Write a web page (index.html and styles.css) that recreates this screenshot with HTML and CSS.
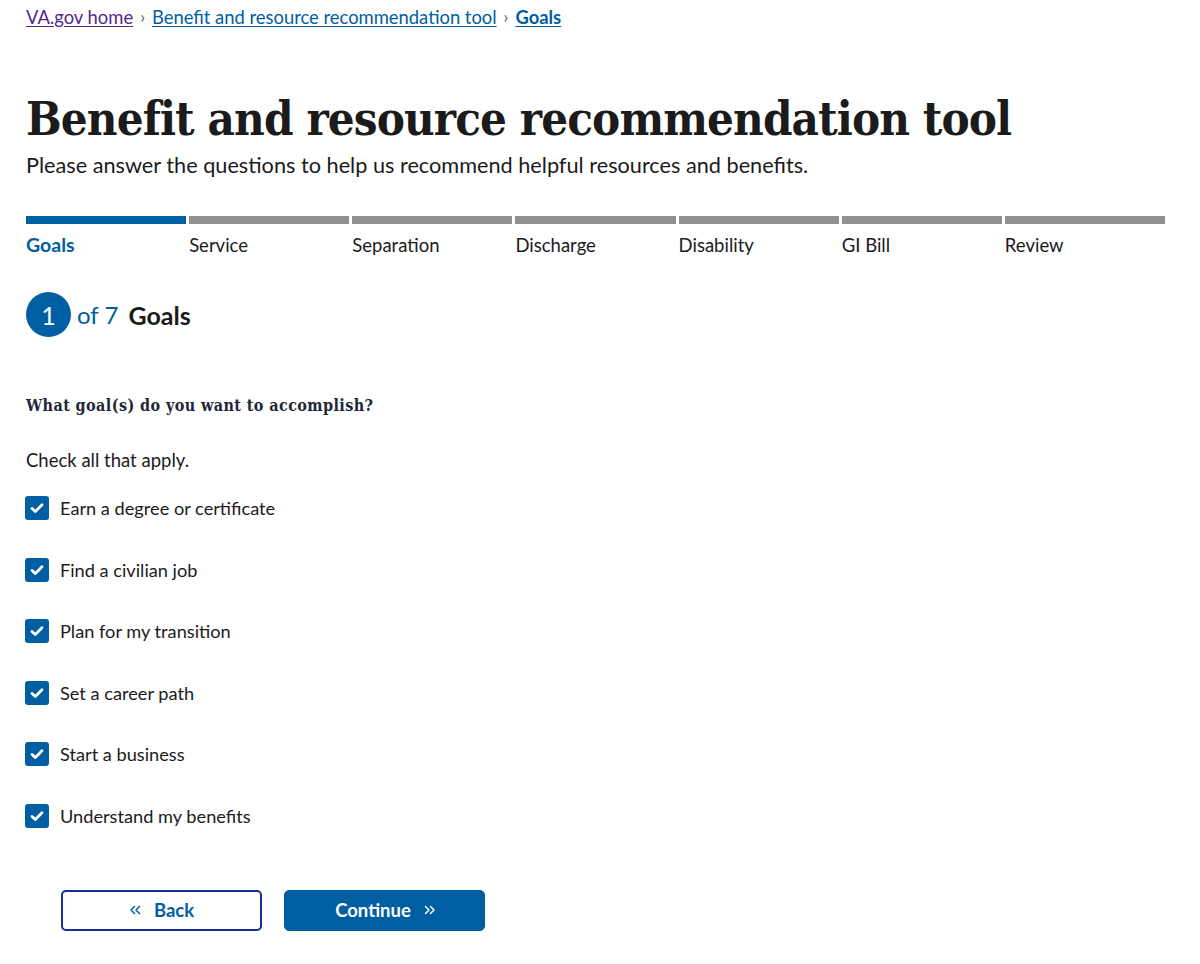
FILE: index.html
```html
<!DOCTYPE html>
<html lang="en">
<head>
<meta charset="utf-8">
<title>Benefit and resource recommendation tool</title>
<link rel="stylesheet" href="styles.css">
</head>
<body>
<div class="page">
  <nav class="breadcrumbs" aria-label="Breadcrumb">
    <a class="crumb visited" href="#">VA.gov home</a>
    <span class="sep">›</span>
    <a class="crumb" href="#">Benefit and resource recommendation tool</a>
    <span class="sep">›</span>
    <a class="crumb current" href="#">Goals</a>
  </nav>

  <h1 class="title">Benefit and resource recommendation tool</h1>
  <p class="lead">Please answer the questions to help us recommend helpful resources and benefits.</p>

  <ol class="progress">
    <li class="seg active"><span class="bar"></span><span class="label">Goals</span></li>
    <li class="seg"><span class="bar"></span><span class="label">Service</span></li>
    <li class="seg"><span class="bar"></span><span class="label">Separation</span></li>
    <li class="seg"><span class="bar"></span><span class="label">Discharge</span></li>
    <li class="seg"><span class="bar"></span><span class="label">Disability</span></li>
    <li class="seg"><span class="bar"></span><span class="label">GI Bill</span></li>
    <li class="seg"><span class="bar"></span><span class="label">Review</span></li>
  </ol>

  <div class="step">
    <span class="step-num">1</span>
    <span class="step-of">of 7</span>
    <span class="step-name">Goals</span>
  </div>

  <fieldset class="question">
    <legend class="q-title">What goal(s) do you want to accomplish?</legend>
    <p class="hint">Check all that apply.</p>
    <div class="options">
      <label class="option"><span class="box"><svg viewBox="0 0 24 24" width="24" height="24"><path d="M7 12.4l3.3 3.2 6.7-6.8" fill="none" stroke="#fff" stroke-width="2.8" stroke-linecap="round" stroke-linejoin="round"/></svg></span><span class="opt-text">Earn a degree or certificate</span></label>
      <label class="option"><span class="box"><svg viewBox="0 0 24 24" width="24" height="24"><path d="M7 12.4l3.3 3.2 6.7-6.8" fill="none" stroke="#fff" stroke-width="2.8" stroke-linecap="round" stroke-linejoin="round"/></svg></span><span class="opt-text">Find a civilian job</span></label>
      <label class="option"><span class="box"><svg viewBox="0 0 24 24" width="24" height="24"><path d="M7 12.4l3.3 3.2 6.7-6.8" fill="none" stroke="#fff" stroke-width="2.8" stroke-linecap="round" stroke-linejoin="round"/></svg></span><span class="opt-text">Plan for my transition</span></label>
      <label class="option"><span class="box"><svg viewBox="0 0 24 24" width="24" height="24"><path d="M7 12.4l3.3 3.2 6.7-6.8" fill="none" stroke="#fff" stroke-width="2.8" stroke-linecap="round" stroke-linejoin="round"/></svg></span><span class="opt-text">Set a career path</span></label>
      <label class="option"><span class="box"><svg viewBox="0 0 24 24" width="24" height="24"><path d="M7 12.4l3.3 3.2 6.7-6.8" fill="none" stroke="#fff" stroke-width="2.8" stroke-linecap="round" stroke-linejoin="round"/></svg></span><span class="opt-text">Start a business</span></label>
      <label class="option"><span class="box"><svg viewBox="0 0 24 24" width="24" height="24"><path d="M7 12.4l3.3 3.2 6.7-6.8" fill="none" stroke="#fff" stroke-width="2.8" stroke-linecap="round" stroke-linejoin="round"/></svg></span><span class="opt-text">Understand my benefits</span></label>
    </div>
  </fieldset>

  <div class="actions">
    <button class="btn btn-back" type="button"><svg class="chev" viewBox="0 0 12 10" width="12" height="10"><path d="M5.5 1.5L2 5l3.5 3.5M10.5 1.5L7 5l3.5 3.5" fill="none" stroke="currentColor" stroke-width="1.5" stroke-linecap="round" stroke-linejoin="round"/></svg><span>Back</span></button>
    <button class="btn btn-continue" type="button"><span>Continue</span><svg class="chev" viewBox="0 0 12 10" width="12" height="10"><path d="M1.5 1.5L5 5 1.5 8.5M6.5 1.5L10 5 6.5 8.5" fill="none" stroke="currentColor" stroke-width="1.5" stroke-linecap="round" stroke-linejoin="round"/></svg></button>
  </div>
</div>
</body>
</html>
```

FILE: styles.css
```css
* { box-sizing: border-box; }

body {
  margin: 0;
  background: #fff;
  color: #1b1b1b;
  font-family: Lato, "Noto Sans", sans-serif;
}

.page {
  padding: 4px 35px 0 26px;
}

.breadcrumbs {
  display: flex;
  align-items: center;
  gap: 7px;
  font-size: 18.4px;
  line-height: 26px;
}

.crumb {
  color: #005ea2;
  text-decoration: underline;
  text-underline-offset: 2px;
}

.crumb.visited { color: #54278f; }
.crumb.current { font-weight: 700; }

.sep {
  color: #565c65;
  font-size: 17px;
}

.title {
  margin: 61px 0 0;
  font-family: "DejaVu Serif Condensed", "DejaVu Serif", serif;
  font-stretch: condensed;
  font-weight: 700;
  font-size: 47px;
  line-height: 56px;
  letter-spacing: -0.9px;
  color: #1b1b1b;
}

.lead {
  margin: 3px 0 0;
  font-size: 21.7px;
  line-height: 30px;
}

.progress {
  list-style: none;
  margin: 36px 0 0;
  padding: 0;
  display: grid;
  grid-template-columns: repeat(7, 1fr);
  gap: 3px;
}

.seg { display: flex; flex-direction: column; }

.bar {
  height: 8px;
  background: #919191;
}

.seg.active .bar { background: #005ea2; }

.label {
  margin-top: 10px;
  font-size: 18.5px;
  line-height: 22px;
  color: #1b1b1b;
}

.seg.active .label {
  color: #005ea2;
  font-weight: 700;
  font-size: 19.5px;
}

.step {
  margin-top: 36px;
  display: flex;
  align-items: center;
  gap: 6px;
  font-size: 24px;
}

.step-num {
  width: 45px;
  height: 45px;
  border-radius: 50%;
  background: #005ea2;
  color: #fff;
  display: flex;
  align-items: center;
  justify-content: center;
  font-size: 25px;
}

.step-of { color: #005ea2; }

.step-name {
  font-weight: 700;
  font-size: 25px;
  margin-left: 4px;
}

.question {
  border: 0;
  margin: 57px 0 0;
  padding: 0;
}

.q-title {
  padding: 0;
  font-family: "DejaVu Serif Condensed", "DejaVu Serif", serif;
  font-stretch: condensed;
  font-weight: 700;
  font-size: 16px;
  line-height: 24px;
  letter-spacing: 0.4px;
  color: #1d2736;
}

.hint {
  margin: 29px 0 0;
  font-size: 18.5px;
  line-height: 26px;
}

.options {
  margin-top: 23px;
  display: flex;
  flex-direction: column;
  gap: 37.6px;
}

.option {
  display: flex;
  align-items: center;
  gap: 11px;
  font-size: 18.2px;
  line-height: 24px;
  margin-left: -1px;
}

.box {
  width: 24px;
  height: 24px;
  border-radius: 3px;
  background: #005ea2;
  display: flex;
}

.actions {
  margin: 62px 0 0 35px;
  display: flex;
  gap: 22px;
}

.btn {
  width: 201px;
  height: 41px;
  border-radius: 5px;
  font-family: Lato, "Noto Sans", sans-serif;
  font-size: 18.5px;
  font-weight: 700;
  display: flex;
  align-items: center;
  justify-content: center;
  gap: 13px;
  cursor: pointer;
}

.btn-back {
  background: #fff;
  color: #005ea2;
  border: 2px solid #162e9a;
}

.btn-continue {
  background: #005ea2;
  color: #fff;
  border: 1px solid #005ea2;
  padding-right: 4px;
}

.chev { display: block; }
```
